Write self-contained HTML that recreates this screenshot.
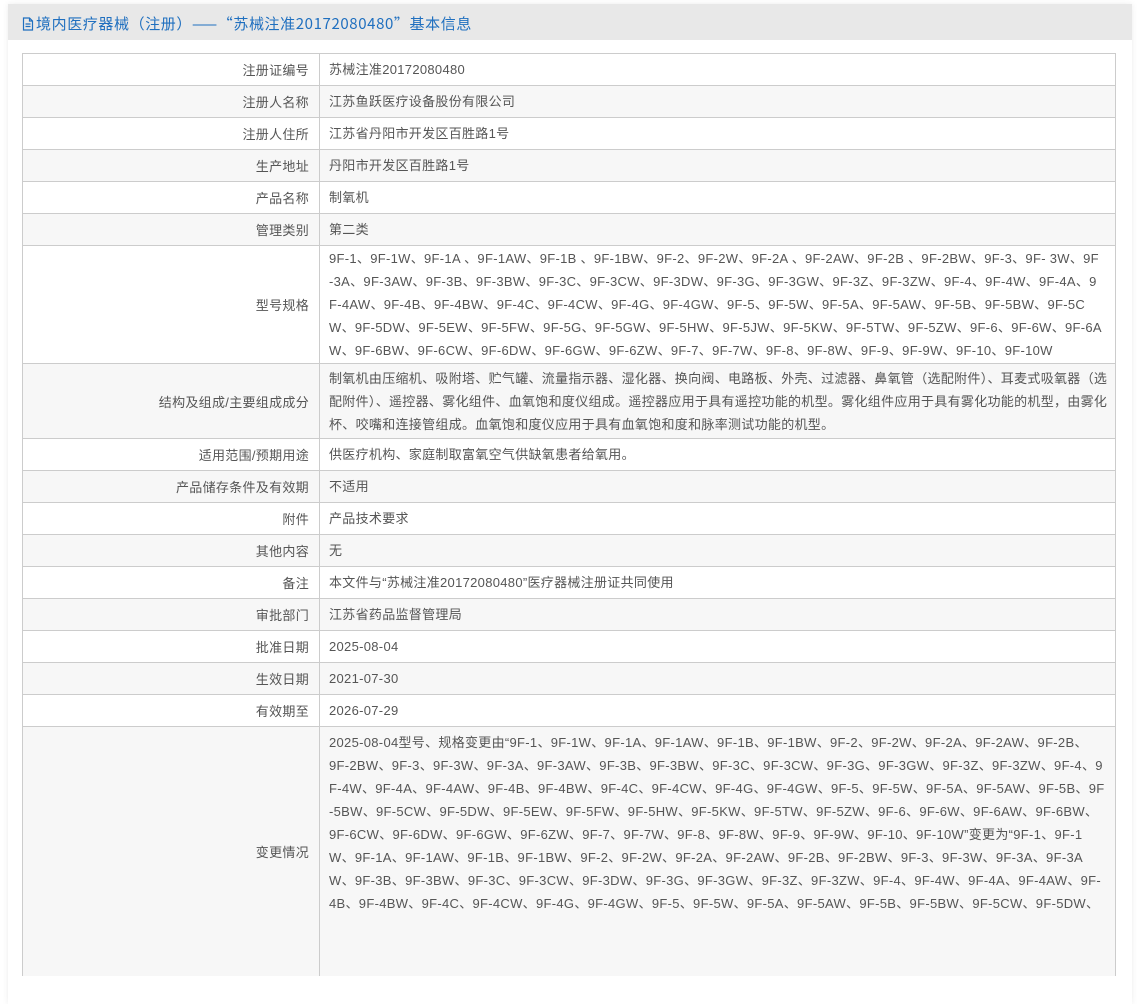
<!DOCTYPE html>
<html><head><meta charset="utf-8"><style>
html,body{margin:0;height:900px;overflow:hidden}
body{background:#fff;font-family:"Liberation Sans","Noto Sans CJK SC",sans-serif;font-size:13px;color:#555;width:1143px;letter-spacing:.3px}
.panel{position:absolute;left:8px;top:4px;width:1124px;height:1000px;background:#fff;box-shadow:0 0 6px rgba(0,0,0,.08)}
.hd{height:36px;background:#e8e8e8;color:#1f6fbf;font-size:15px;line-height:39px;padding-left:14px;white-space:nowrap;font-family:"Noto Sans CJK SC","Liberation Sans",sans-serif;letter-spacing:.6px}
.tbl{position:absolute;left:14px;top:49px;width:1092px;border:1px solid #ccc;border-bottom:none}
.r{display:flex;border-top:1px solid #ccc;box-sizing:border-box}
.r:first-child{border-top:none}
.r.g{background:#f7f7f7}
.l{width:297px;border-right:1px solid #ccc;text-align:right;padding-right:10px;box-sizing:border-box;display:flex;align-items:center;justify-content:flex-end;flex:none}
.c{padding-left:9px;line-height:23px;white-space:nowrap;overflow:hidden;display:flex;align-items:center;flex:1}
</style></head><body>
<div class="panel">
<div class="hd"><svg width="12" height="14" viewBox="0 0 12 14" style="vertical-align:-2px;margin-right:2px"><path d="M1.5 1h6l3 3v9h-9z M7.5 1v3h3 M3.5 7h5M3.5 9.5h5" fill="none" stroke="#1f6fbf" stroke-width="1.2"/></svg>境内医疗器械（注册）——“苏械注准20172080480”基本信息</div>
<div class="tbl">
<div class="r" style="height:31px"><div class="l">注册证编号</div><div class="c">苏械注准20172080480</div></div>
<div class="r g" style="height:32px"><div class="l">注册人名称</div><div class="c">江苏鱼跃医疗设备股份有限公司</div></div>
<div class="r" style="height:32px"><div class="l">注册人住所</div><div class="c">江苏省丹阳市开发区百胜路1号</div></div>
<div class="r g" style="height:32px"><div class="l">生产地址</div><div class="c">丹阳市开发区百胜路1号</div></div>
<div class="r" style="height:32px"><div class="l">产品名称</div><div class="c">制氧机</div></div>
<div class="r g" style="height:32px"><div class="l">管理类别</div><div class="c">第二类</div></div>
<div class="r" style="height:118px"><div class="l">型号规格</div><div class="c"><div>9F-1、9F-1W、9F-1A 、9F-1AW、9F-1B 、9F-1BW、9F-2、9F-2W、9F-2A 、9F-2AW、9F-2B 、9F-2BW、9F-3、9F- 3W、9F<br>-3A、9F-3AW、9F-3B、9F-3BW、9F-3C、9F-3CW、9F-3DW、9F-3G、9F-3GW、9F-3Z、9F-3ZW、9F-4、9F-4W、9F-4A、9<br>F-4AW、9F-4B、9F-4BW、9F-4C、9F-4CW、9F-4G、9F-4GW、9F-5、9F-5W、9F-5A、9F-5AW、9F-5B、9F-5BW、9F-5C<br>W、9F-5DW、9F-5EW、9F-5FW、9F-5G、9F-5GW、9F-5HW、9F-5JW、9F-5KW、9F-5TW、9F-5ZW、9F-6、9F-6W、9F-6A<br>W、9F-6BW、9F-6CW、9F-6DW、9F-6GW、9F-6ZW、9F-7、9F-7W、9F-8、9F-8W、9F-9、9F-9W、9F-10、9F-10W</div></div></div>
<div class="r g" style="height:75px"><div class="l">结构及组成/主要组成成分</div><div class="c"><div>制氧机由压缩机、吸附塔、贮气罐、流量指示器、湿化器、换向阀、电路板、外壳、过滤器、鼻氧管（选配附件）、耳麦式吸氧器（选<br>配附件）、遥控器、雾化组件、血氧饱和度仪组成。遥控器应用于具有遥控功能的机型。雾化组件应用于具有雾化功能的机型，由雾化<br>杯、咬嘴和连接管组成。血氧饱和度仪应用于具有血氧饱和度和脉率测试功能的机型。</div></div></div>
<div class="r" style="height:32px"><div class="l">适用范围/预期用途</div><div class="c">供医疗机构、家庭制取富氧空气供缺氧患者给氧用。</div></div>
<div class="r g" style="height:32px"><div class="l">产品储存条件及有效期</div><div class="c">不适用</div></div>
<div class="r" style="height:32px"><div class="l">附件</div><div class="c">产品技术要求</div></div>
<div class="r g" style="height:32px"><div class="l">其他内容</div><div class="c">无</div></div>
<div class="r" style="height:32px"><div class="l">备注</div><div class="c">本文件与“苏械注准20172080480”医疗器械注册证共同使用</div></div>
<div class="r g" style="height:32px"><div class="l">审批部门</div><div class="c">江苏省药品监督管理局</div></div>
<div class="r" style="height:32px"><div class="l">批准日期</div><div class="c">2025-08-04</div></div>
<div class="r g" style="height:32px"><div class="l">生效日期</div><div class="c">2021-07-30</div></div>
<div class="r" style="height:32px"><div class="l">有效期至</div><div class="c">2026-07-29</div></div>
<div class="r g" style="height:250px"><div class="l">变更情况</div><div class="c" style="align-items:flex-start;padding-top:4px"><div>2025-08-04型号、规格变更由“9F-1、9F-1W、9F-1A、9F-1AW、9F-1B、9F-1BW、9F-2、9F-2W、9F-2A、9F-2AW、9F-2B、<br>9F-2BW、9F-3、9F-3W、9F-3A、9F-3AW、9F-3B、9F-3BW、9F-3C、9F-3CW、9F-3G、9F-3GW、9F-3Z、9F-3ZW、9F-4、9<br>F-4W、9F-4A、9F-4AW、9F-4B、9F-4BW、9F-4C、9F-4CW、9F-4G、9F-4GW、9F-5、9F-5W、9F-5A、9F-5AW、9F-5B、9F<br>-5BW、9F-5CW、9F-5DW、9F-5EW、9F-5FW、9F-5HW、9F-5KW、9F-5TW、9F-5ZW、9F-6、9F-6W、9F-6AW、9F-6BW、<br>9F-6CW、9F-6DW、9F-6GW、9F-6ZW、9F-7、9F-7W、9F-8、9F-8W、9F-9、9F-9W、9F-10、9F-10W”变更为“9F-1、9F-1<br>W、9F-1A、9F-1AW、9F-1B、9F-1BW、9F-2、9F-2W、9F-2A、9F-2AW、9F-2B、9F-2BW、9F-3、9F-3W、9F-3A、9F-3A<br>W、9F-3B、9F-3BW、9F-3C、9F-3CW、9F-3DW、9F-3G、9F-3GW、9F-3Z、9F-3ZW、9F-4、9F-4W、9F-4A、9F-4AW、9F-<br>4B、9F-4BW、9F-4C、9F-4CW、9F-4G、9F-4GW、9F-5、9F-5W、9F-5A、9F-5AW、9F-5B、9F-5BW、9F-5CW、9F-5DW、</div></div></div>
</div>
</div>
</body></html>
